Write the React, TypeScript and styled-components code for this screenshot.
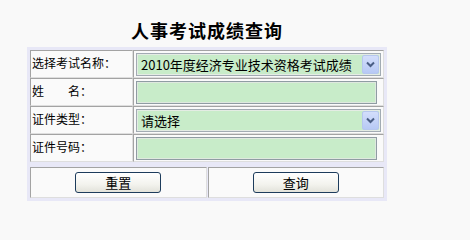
import React from "react";
import styled, { createGlobalStyle } from "styled-components";

const Global = createGlobalStyle`
  html, body { margin: 0; padding: 0; background: #f9f9f9; }
  body { font-family: "Noto Sans CJK SC", "Liberation Sans", sans-serif; color: #000; }
`;

const Page = styled.div`
  padding: 18px 0 0 27px;
  width: 360px;
`;

const Title = styled.h1`
  margin: 0 0 5px 0;
  height: 24px;
  line-height: 24px;
  font-size: 18px;
  font-weight: 700;
  letter-spacing: 1px;
  text-align: center;
  font-family: "Noto Sans CJK SC", sans-serif;
`;

const Frame = styled.div`
  background: #e8e8f7;
  padding: 3px;
  display: flex;
  flex-direction: column;
  gap: 5px;
`;

const FormGrid = styled.div`
  display: grid;
  grid-template-columns: 103px 1fr;
  grid-auto-rows: 28px;
  background: #fafafa;
`;

const Cell = styled.div`
  box-sizing: border-box;
  display: flex;
  align-items: center;
  border-top: 1px solid #a3a3a3;
  border-left: 1px solid #a3a3a3;
  border-right: 1px solid #dedede;
  border-bottom: 1px solid #dedede;
  background: #fafafa;
`;

const LabelCell = styled(Cell)`
  padding: 0 0 3px 1px;
  font-size: 12px;
  white-space: pre;
`;

const ValueCell = styled(Cell)`
  padding-left: 2px;
`;

const SelectBox = styled.div`
  box-sizing: border-box;
  width: 245px;
  height: 23px;
  border: 1px solid #a2abb3;
  background: #c8ecc9;
  display: flex;
  align-items: center;
  padding: 1px;
  box-shadow: inset 0 0 0 1px #e4ece4;
`;

const SelectText = styled.span`
  flex: 1;
  padding-left: 3px;
  font-size: 13px;
  line-height: 19px;
  white-space: nowrap;
  overflow: hidden;
`;

const ArrowBtn = styled.span`
  box-sizing: border-box;
  width: 17px;
  height: 19px;
  border: 1px solid #b6c7ee;
  border-radius: 2px;
  background: linear-gradient(#d3defb, #b7c9f5);
  display: flex;
  align-items: center;
  justify-content: center;
`;

const TextInput = styled.div`
  box-sizing: border-box;
  width: 241px;
  height: 23px;
  border: 1px solid #8f9ca3;
  background: #c8ecc9;
  box-shadow: inset 0 0 0 1px #dfe8df;
`;

const ButtonRow = styled.div`
  display: grid;
  grid-template-columns: 1fr 1fr;
  column-gap: 1px;
  height: 31px;
`;

const ButtonCell = styled(Cell)`
  justify-content: center;
`;

const Button = styled.button`
  box-sizing: border-box;
  width: 86px;
  height: 21px;
  border: 1px solid #1d3c5c;
  border-radius: 3px;
  background: linear-gradient(#ffffff, #f3f3ee 60%, #e2e2da);
  font-family: "Noto Sans CJK SC", sans-serif;
  font-size: 13px;
  line-height: 17px;
  padding: 0;
  color: #000;
`;

const Chevron = () => (
  <svg width="9" height="7" viewBox="0 0 9 7">
    <path d="M1 1.5 L4.5 5 L8 1.5" fill="none" stroke="#4a5e85" strokeWidth="2" />
  </svg>
);

const Select = ({ value }: { value: string }) => (
  <SelectBox>
    <SelectText>{value}</SelectText>
    <ArrowBtn>
      <Chevron />
    </ArrowBtn>
  </SelectBox>
);

export default function App() {
  return (
    <>
      <Global />
      <Page>
        <Title>人事考试成绩查询</Title>
        <Frame>
          <FormGrid>
            <LabelCell>选择考试名称：</LabelCell>
            <ValueCell>
              <Select value="2010年度经济专业技术资格考试成绩" />
            </ValueCell>
            <LabelCell>{"姓　　名："}</LabelCell>
            <ValueCell>
              <TextInput />
            </ValueCell>
            <LabelCell>证件类型：</LabelCell>
            <ValueCell>
              <Select value="请选择" />
            </ValueCell>
            <LabelCell>证件号码：</LabelCell>
            <ValueCell>
              <TextInput />
            </ValueCell>
          </FormGrid>
          <ButtonRow>
            <ButtonCell>
              <Button>重置</Button>
            </ButtonCell>
            <ButtonCell>
              <Button>查询</Button>
            </ButtonCell>
          </ButtonRow>
        </Frame>
      </Page>
    </>
  );
}
